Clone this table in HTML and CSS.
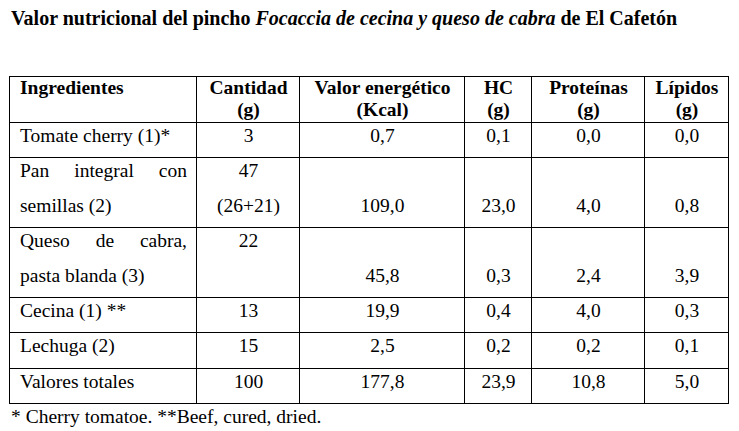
FILE: index.html
```html
<!DOCTYPE html>
<html lang="es">
<head>
<meta charset="utf-8">
<title>Valor nutricional</title>
<link rel="stylesheet" href="styles.css">
</head>
<body>
<main class="page">
  <h1 class="title">Valor nutricional del pincho <em>Focaccia de cecina y queso de cabra</em> de El Cafetón</h1>
  <table class="nutri">
    <colgroup>
      <col class="c-ing"><col class="c-cant"><col class="c-kcal"><col class="c-hc"><col class="c-prot"><col class="c-lip">
    </colgroup>
    <thead>
      <tr class="r-head">
        <th class="left">Ingredientes</th>
        <th>Cantidad<br>(g)</th>
        <th>Valor energético<br>(Kcal)</th>
        <th>HC<br>(g)</th>
        <th>Proteínas<br>(g)</th>
        <th>Lípidos<br>(g)</th>
      </tr>
    </thead>
    <tbody>
      <tr class="r1">
        <td class="left">Tomate cherry (1)*</td>
        <td>3</td><td>0,7</td><td>0,1</td><td>0,0</td><td>0,0</td>
      </tr>
      <tr class="r2">
        <td class="left"><span class="line just">Pan integral con</span><span class="line">semillas (2)</span></td>
        <td><span class="line">47</span><span class="line">(26+21)</span></td>
        <td class="lower">109,0</td><td class="lower">23,0</td><td class="lower">4,0</td><td class="lower">0,8</td>
      </tr>
      <tr class="r2">
        <td class="left"><span class="line just">Queso de cabra,</span><span class="line">pasta blanda (3)</span></td>
        <td><span class="line">22</span></td>
        <td class="lower">45,8</td><td class="lower">0,3</td><td class="lower">2,4</td><td class="lower">3,9</td>
      </tr>
      <tr class="r1">
        <td class="left">Cecina (1) **</td>
        <td>13</td><td>19,9</td><td>0,4</td><td>4,0</td><td>0,3</td>
      </tr>
      <tr class="r1b">
        <td class="left">Lechuga (2)</td>
        <td>15</td><td>2,5</td><td>0,2</td><td>0,2</td><td>0,1</td>
      </tr>
      <tr class="r1">
        <td class="left">Valores totales</td>
        <td>100</td><td>177,8</td><td>23,9</td><td>10,8</td><td>5,0</td>
      </tr>
    </tbody>
  </table>
  <p class="note">* Cherry tomatoe. **Beef, cured, dried.</p>
</main>
</body>
</html>
```

FILE: styles.css
```css
* { box-sizing: border-box; }

html, body {
  margin: 0;
  padding: 0;
  background: #ffffff;
}

body {
  font-family: "Liberation Serif", "Times New Roman", serif;
  font-size: 19.5px;
  color: #000000;
}

.page {
  padding: 0 0 0 9px;
}

.title {
  margin: 6px 0 0 0;
  padding-left: 2px;
  font-size: 20px;
  font-weight: bold;
  line-height: 25px;
}

.title em {
  font-style: italic;
}

.nutri {
  margin-top: 45px;
  width: 719px;
  table-layout: fixed;
  border-collapse: collapse;
}

.c-ing { width: 187px; }
.c-cant { width: 103px; }
.c-kcal { width: 165px; }
.c-hc { width: 67px; }
.c-prot { width: 113px; }
.c-lip { width: 84px; }

.nutri th,
.nutri td {
  border: 1px solid #000000;
  padding: 0 9px 0 10px;
  vertical-align: top;
  text-align: center;
  font-family: "Liberation Serif", "Times New Roman", serif;
  font-size: 19.5px;
  color: #000000;
}

.nutri th {
  font-weight: bold;
  line-height: 22px;
}

.nutri td {
  line-height: 25px;
}

.nutri .left {
  text-align: left;
}

.r-head { height: 46px; }
.r1 { height: 35px; }
.r1b { height: 36px; }
.r2 { height: 70px; }

.line {
  display: block;
  height: 35px;
}

.line:last-child {
  height: auto;
}

.just {
  text-align: justify;
  text-align-last: justify;
}

.nutri td.lower {
  padding-top: 35px;
}

.note {
  margin: 0;
  padding-left: 2px;
  font-size: 19.5px;
  line-height: 25px;
}
```
